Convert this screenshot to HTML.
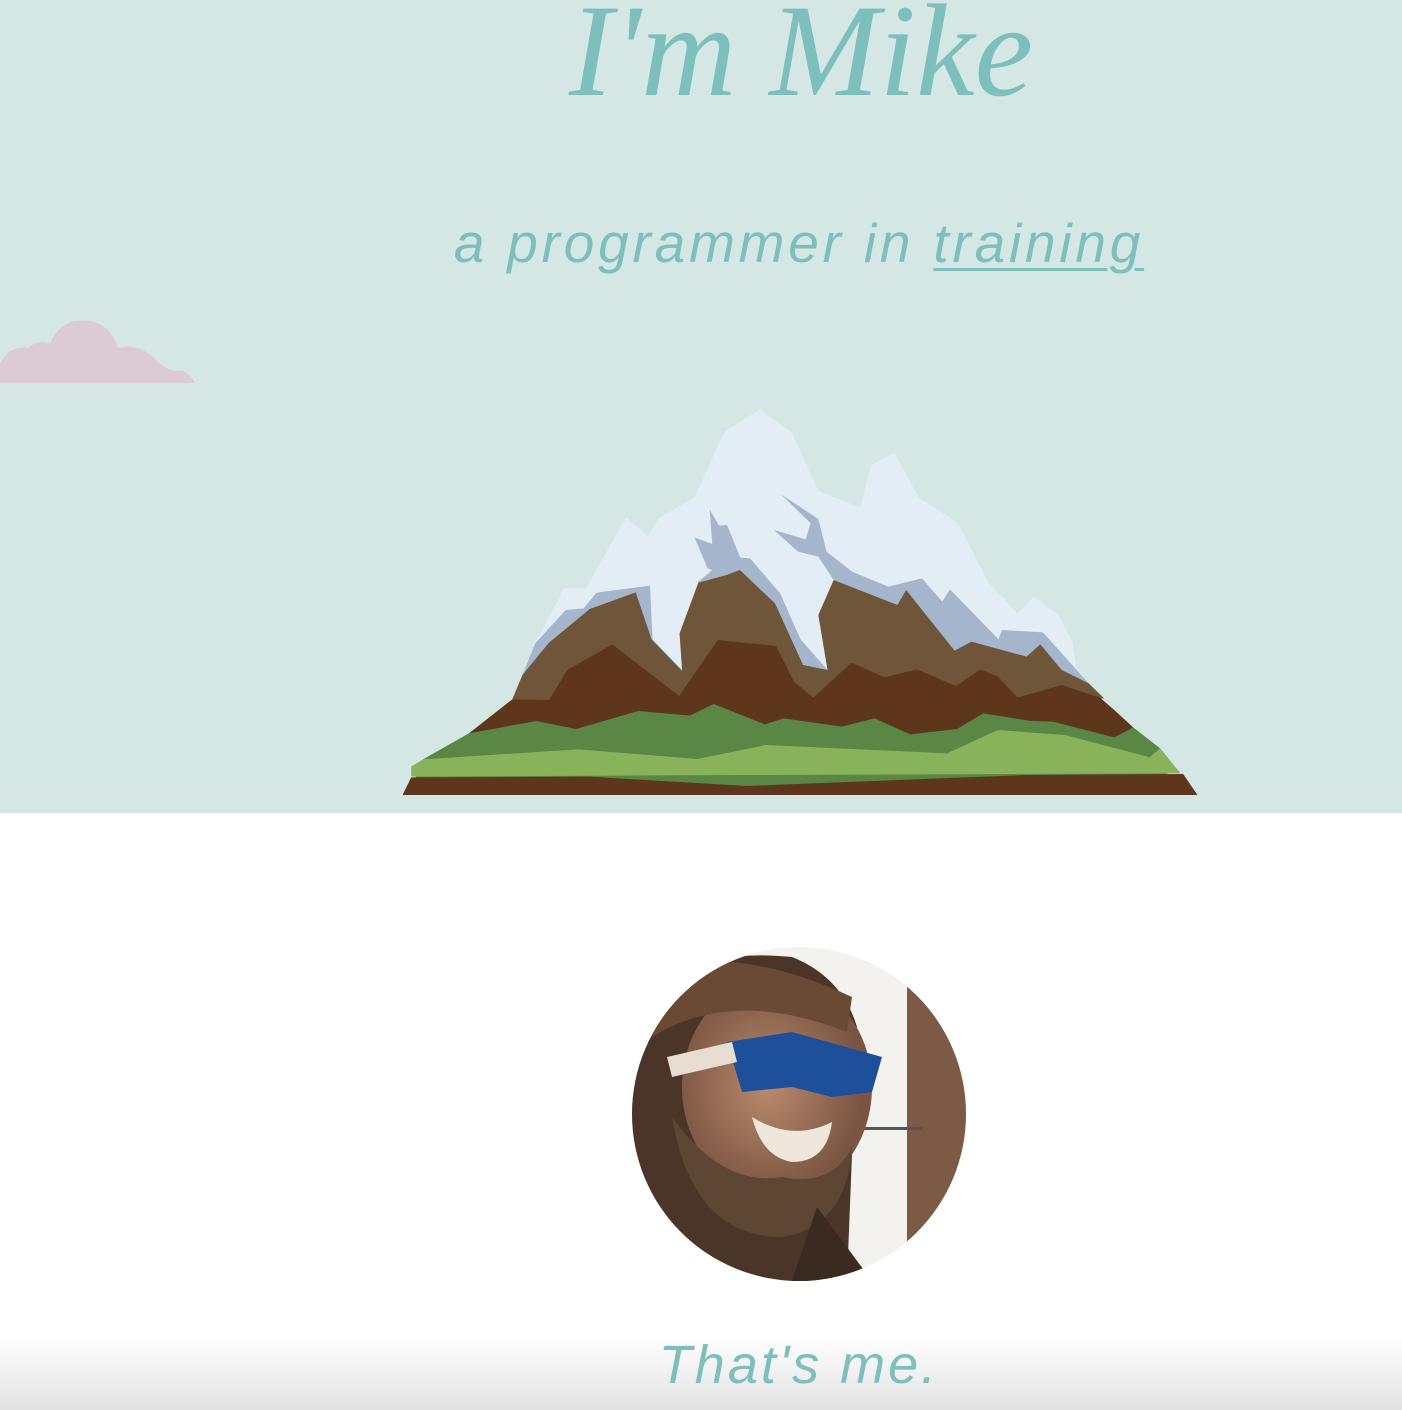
<!DOCTYPE html>
<html><head><meta charset="utf-8"><style>
html,body{margin:0;padding:0;width:1402px;height:1410px;overflow:hidden;background:#fff;position:relative;font-family:"Liberation Sans",sans-serif}
.top{position:absolute;left:0;top:0;width:1402px;height:813px;background:#d5e7e5}
.title{position:absolute;left:0;width:1402px;top:-14px;text-align:center;padding-left:200px;box-sizing:border-box;font-family:"Liberation Serif",serif;font-style:italic;font-size:132px;color:#7dbfbd;line-height:130px}
.sub{position:absolute;left:0;width:1402px;padding-left:196px;box-sizing:border-box;top:211px;text-align:center;font-style:italic;font-size:55px;color:#7dbfbd;line-height:64px;letter-spacing:3.8px}
.sub u{text-decoration-thickness:3px;text-underline-offset:6px}
.me{position:absolute;left:0;width:1402px;padding-left:196px;box-sizing:border-box;top:1333px;text-align:center;font-style:italic;font-size:54px;color:#7dbfbd;line-height:64px;letter-spacing:3px}
.fade{position:absolute;left:0;top:1335px;width:1402px;height:75px;background:linear-gradient(#fff,#e2e2e2)}
</style></head><body>
<div class="top"></div>
<div class="title">I'm Mike</div>
<div class="sub">a programmer in <u>training</u></div>
<svg style="position:absolute;left:0;top:316px" width="200" height="70" viewBox="0 0 200 70">
<path d="M0 67 L0 48 Q8 30 28 32 Q40 22 50 28 Q62 -2 95 6 Q112 12 118 32 Q140 26 158 46 Q172 58 182 54 Q192 60 195 67 Z" fill="#dccbd3"/>
</svg>
<svg style="position:absolute;left:400px;top:400px" width="800" height="400" viewBox="0 0 1568 1200" preserveAspectRatio="none">
<polygon fill="#e3edf6" points="240,825 265,730 322,565 365,565 443,352 485,408 509,353 577,293 636,95 706,28 768,98 820,273 902,323 923,197 968,157 1017,293 1093,368 1152,545 1210,640 1242,590 1290,643 1318,725 1325,800 1350,850 1200,900"/>
<polygon fill="#a5b5cb" points="240,825 265,730 325,630 360,625 385,578 490,557 495,718 553,810 548,700 585,545 612,510 603,505 577,412 612,432 607,328 625,377 641,375 667,473 686,475 745,580 785,718 838,810 820,645 850,540 886,515 957,560 1023,535 1063,605 1078,568 1173,718 1180,690 1260,697 1350,850 1000,900"/>
<polygon fill="#a5b5cb" points="747,283 820,357 836,455 886,515 850,540 820,470 780,455 733,390 795,418 805,370"/>
<polygon fill="#6f563a" points="220,898 240,825 292,728 372,627 462,577 493,718 553,813 548,700 585,548 640,525 666,510 735,610 790,795 838,810 820,645 850,540 975,615 992,570 1087,752 1120,725 1228,770 1255,733 1297,810 1350,850 1380,895 700,950"/>
<polygon fill="#5e361c" points="135,1000 220,898 292,900 328,810 416,733 490,820 547,888 623,720 737,738 772,845 810,893 885,788 950,832 1013,808 1090,858 1137,808 1172,830 1210,893 1297,855 1372,893 1400,930 1437,982 1400,1050 100,1050"/>
<polygon fill="#5a8646" points="45,1078 135,1000 267,963 345,987 467,933 568,947 615,912 715,973 752,955 866,980 930,955 1000,1003 1092,987 1143,940 1237,963 1280,965 1400,1012 1437,982 1490,1045 1470,1072 1535,1165 22,1165"/>
<polygon fill="#89b35b" points="22,1100 45,1078 350,1048 583,1077 717,1035 1072,1060 1172,990 1303,1005 1470,1072 1490,1045 1530,1120 680,1125 22,1130"/>
<polygon fill="#5e361c" points="5,1185 22,1132 370,1130 680,1158 1225,1125 1535,1122 1563,1185"/>
</svg>
<svg style="position:absolute;left:632px;top:947px" width="334" height="334" viewBox="0 0 334 334">
<defs><clipPath id="c"><circle cx="167" cy="167" r="167"/></clipPath>
<radialGradient id="f" cx="0.45" cy="0.5" r="0.5"><stop offset="0" stop-color="#b98a6c"/><stop offset="1" stop-color="#7a5542"/></radialGradient></defs>
<g clip-path="url(#c)">
<rect width="334" height="334" fill="#f3f2ee"/>
<rect x="275" y="30" width="70" height="300" fill="#7d5a45"/>
<rect x="230" y="180" width="60" height="3" fill="#555"/>
<path d="M0 50 Q60 0 160 10 Q210 30 225 80 L215 334 L0 334Z" fill="#4a3528"/>
<ellipse cx="145" cy="140" rx="95" ry="110" fill="url(#f)"/>
<path d="M40 170 Q60 290 150 290 Q215 280 220 200 Q200 240 150 230 Q90 240 40 170Z" fill="#5e4634"/>
<path d="M0 30 Q90 -10 220 50 L215 85 Q100 40 20 90Z" fill="#6b4a35"/>
<path d="M95 95 L160 85 L250 110 L240 145 L200 150 L160 140 L110 145 Z" fill="#1d4f9a"/>
<path d="M35 110 L100 95 L105 115 L40 130Z" fill="#e7ddd0"/>
<path d="M120 170 Q160 195 200 175 Q195 215 160 215 Q130 210 120 170Z" fill="#efe6dc"/>
<path d="M185 260 L240 334 L160 334Z" fill="#3a2a20"/>
</g></svg>
<div class="fade"></div>
<div class="me">That's me.</div>
</body></html>
